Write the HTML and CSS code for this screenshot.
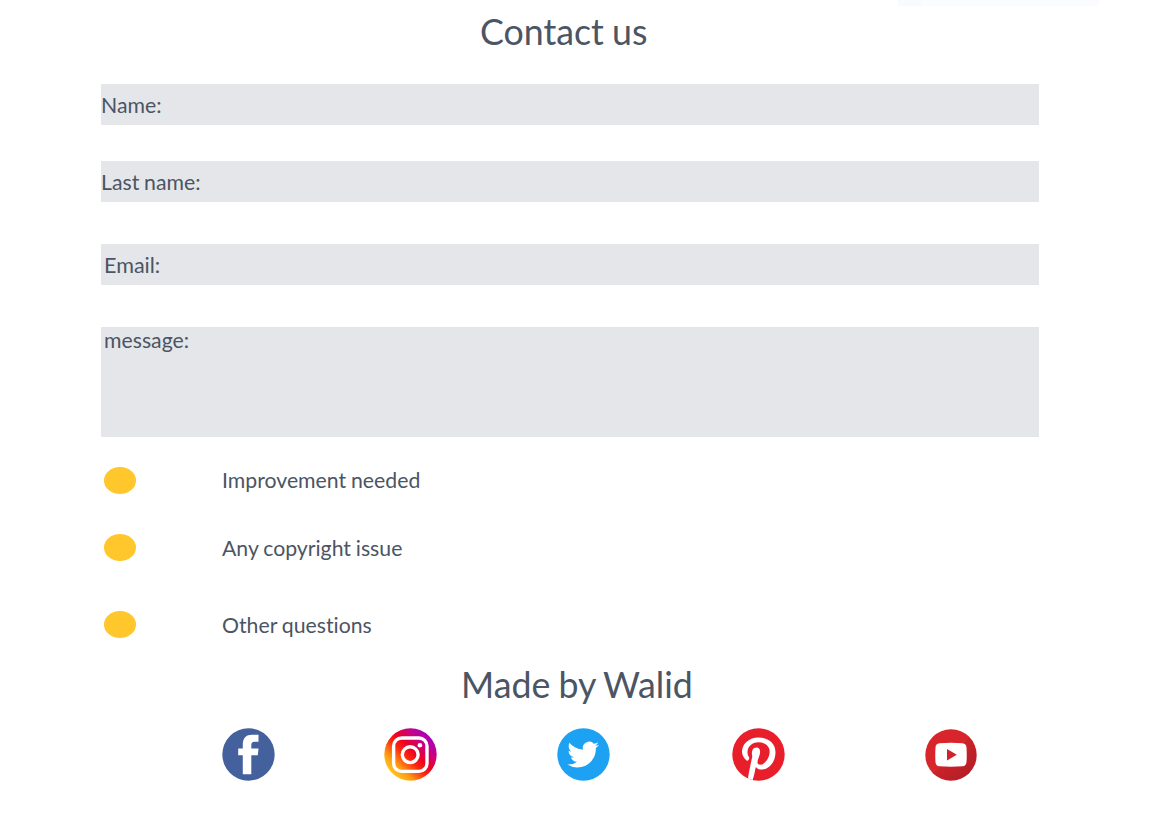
FILE: index.html
```html
<!DOCTYPE html>
<html lang="en">
<head>
<meta charset="utf-8">
<title>Contact us</title>
<link rel="stylesheet" href="styles.css">
</head>
<body>
<div class="top-strip"></div>
<main class="page">
  <h1 class="title title-contact"><span class="text">Contact us</span></h1>
  <form class="form">
    <div class="field"><span class="text">Name:</span></div>
    <div class="field field-last"><span class="text">Last name:</span></div>
    <div class="field field-email"><span class="text">Email:</span></div>
    <div class="field field-message"><span class="text">message:</span></div>
  </form>
  <ul class="options">
    <li class="option option-improve"><i class="dot"></i><span class="text">Improvement needed</span></li>
    <li class="option option-copy"><i class="dot"></i><span class="text">Any copyright issue</span></li>
    <li class="option option-other"><i class="dot"></i><span class="text">Other questions</span></li>
  </ul>
  <h2 class="title title-made"><span class="text">Made by Walid</span></h2>
  <footer class="social">
    <svg class="icon" viewBox="0 0 53 53">
      <circle cx="26.5" cy="26.5" r="26.2" fill="#45619d"/>
      <path fill="#fff" d="M20.800 46.300V27.300H16.200V20.600H20.800V16.500C20.800 10 24.200 6.800 30 6.800H36.500V13.700H32.600C30 13.700 29.300 15 29.300 17V20.600H36.500L35.800 27.300H29.300V46.300Z"/>
    </svg>
    <svg class="icon icon-instagram" viewBox="0 0 53 53">
      <defs>
        <linearGradient id="ig" x1="0.12" y1="0.88" x2="0.88" y2="0.12">
          <stop offset="0" stop-color="#ffcb20"/>
          <stop offset="0.2" stop-color="#ff9d12"/>
          <stop offset="0.42" stop-color="#fb2a10"/>
          <stop offset="0.58" stop-color="#ed0022"/>
          <stop offset="0.8" stop-color="#c4008c"/>
          <stop offset="1" stop-color="#a300c4"/>
        </linearGradient>
      </defs>
      <circle cx="26.500" cy="26.500" r="26.200" fill="url(#ig)"/>
      <g fill="none" stroke="#fff" stroke-width="3.400">
        <rect x="9.600" y="10" width="33.400" height="33.400" rx="8"/>
        <circle cx="26.200" cy="26.700" r="7.900"/>
      </g>
      <circle cx="35.900" cy="17.300" r="2.300" fill="#fff"/>
    </svg>
    <svg class="icon icon-twitter" viewBox="0 0 53 53">
      <circle cx="26.500" cy="26.500" r="26.200" fill="#1da1f2"/>
      <path fill="#fff" transform="translate(10.400 10.700) scale(1.320)" d="M23.953 4.570a10 10 0 01-2.825.775 4.958 4.958 0 002.163-2.723c-.951.555-2.005.959-3.127 1.184a4.920 4.920 0 00-8.384 4.482C7.690 8.095 4.067 6.130 1.640 3.162a4.822 4.822 0 00-.666 2.475c0 1.710.870 3.213 2.188 4.096a4.904 4.904 0 01-2.228-.616v.060a4.923 4.923 0 003.946 4.827 4.996 4.996 0 01-2.212.085 4.936 4.936 0 004.604 3.417 9.867 9.867 0 01-6.102 2.105c-.390 0-.779-.023-1.170-.067a13.995 13.995 0 007.557 2.209c9.053 0 13.998-7.496 13.998-13.985 0-.210 0-.420-.015-.630A9.935 9.935 0 0024 4.590z"/>
    </svg>
    <svg class="icon icon-pinterest" viewBox="0 0 53 53">
      <defs><clipPath id="pin"><circle cx="26.500" cy="26.500" r="26.200"/></clipPath></defs>
      <circle cx="26.500" cy="26.500" r="26.200" fill="#e81f2b"/>
      <g clip-path="url(#pin)" fill="#fff">
        <path d="M14.600 32.500C11.500 29.900 10 26.700 10 23.800C10 15.800 17 9.400 26.600 9.400C36.200 9.400 43.500 15.200 43.500 24.200C43.500 34 37.200 41.500 29.600 41.500C26.900 41.500 25 40.500 23.800 38.900C22.800 43.500 22.300 47.500 20.200 53H15.800C16.200 47.500 17.200 42.900 20.300 28.500C19.200 24.500 20.200 19.600 24.400 19.600C27.800 19.600 28.600 22.700 27.800 26.200C26.900 29.600 24.600 34 25.900 35.700C27.300 37.300 30.900 37 33.400 34.100C36.100 31.100 37.700 27.400 37.700 23.600C37.700 18 33 14.300 26.600 14.300C19.700 14.300 15.500 18.800 15.500 24.300C15.500 26.500 16.200 28 17.100 29.300C17.700 30.400 16.200 33.500 14.600 32.500Z"/>
      </g>
    </svg>
    <svg class="icon icon-youtube" viewBox="0 0 52 52">
      <defs>
        <linearGradient id="yt" x1="0.15" y1="0.15" x2="0.85" y2="0.85">
          <stop offset="0.5" stop-color="#d8252b"/>
          <stop offset="0.51" stop-color="#cb2229"/>
          <stop offset="1" stop-color="#b51e27"/>
        </linearGradient>
      </defs>
      <circle cx="26" cy="26" r="25.700" fill="url(#yt)"/>
      <path fill="#fff" d="M14.500 14.300Q26 13.400 37.500 14.300Q41.300 14.600 41.500 18.500Q42 26 41.500 33Q41.200 37 37.500 37.300Q26 38.200 14.500 37.300Q10.700 37 10.500 33Q10 26 10.500 18.500Q10.700 14.600 14.500 14.300Z"/>
      <path fill="#cf2329" d="M22 20L31.800 25.700L22 31.500Z"/>
    </svg>
  </footer>
</main>
</body>
</html>
```
FILE: styles.css
```css
* { box-sizing: border-box; }

body {
  margin: 0;
  background: #fff;
  color: #4b5563;
  font-family: Lato, sans-serif;
  font-size: 22px;
  font-variant-ligatures: none;
}

.top-strip {
  position: absolute;
  top: 0;
  left: 898px;
  width: 201px;
  height: 6px;
  background: linear-gradient(90deg, #f5fbff 24px, #fafcff 24px);
}

.page {
  height: 828px;
  padding: 0 114px 0 101px;
  overflow: hidden;
}

/* slightly condensed lettering */
.text {
  display: inline-block;
  transform: scaleX(0.966);
  transform-origin: 0 50%;
  white-space: nowrap;
  word-spacing: -0.03em;
}

.title {
  margin: 0;
  font-size: 37px;
  font-weight: 400;
  line-height: 48px;
}

.title-contact { padding: 7px 0 0 379px; }
.title-made { padding: 22px 0 0 360px; }

.form { padding-top: 29px; }

.field {
  display: flex;
  align-items: center;
  height: 41px;
  background: #e5e6ea;
  line-height: 28px;
}

.field .text { padding-top: 1px; }

.field-last { margin-top: 36px; }
.field-email { margin-top: 42px; padding-left: 2.500px; }
.field-email .text { transform: scaleX(0.98); }

.field-message {
  align-items: flex-start;
  height: 110px;
  margin-top: 42px;
  padding-left: 2.500px;
}

.field-message .text {
  padding: 0;
  line-height: 26px;
}

.options {
  margin: 0;
  padding: 30px 0 0 2.500px;
  list-style: none;
}

.option {
  display: flex;
  align-items: center;
  gap: 86px;
  height: 27px;
}

.option-improve .text { padding-bottom: 2px; }
.option-copy { margin-top: 40px; }
.option-other { margin-top: 50px; }

.dot {
  width: 32.500px;
  height: 27px;
  border-radius: 50%;
  background: #ffc72c;
}

.social {
  display: flex;
  align-items: center;
  padding: 20px 0 0 120.500px;
}

.icon {
  flex: none;
  width: 53px;
  height: 53px;
}

.icon-instagram { margin-left: 109px; }
.icon-twitter { margin-left: 120px; }
.icon-pinterest { margin-left: 122px; }
.icon-youtube { width: 52px; height: 52px; margin-left: 140px; }
```
